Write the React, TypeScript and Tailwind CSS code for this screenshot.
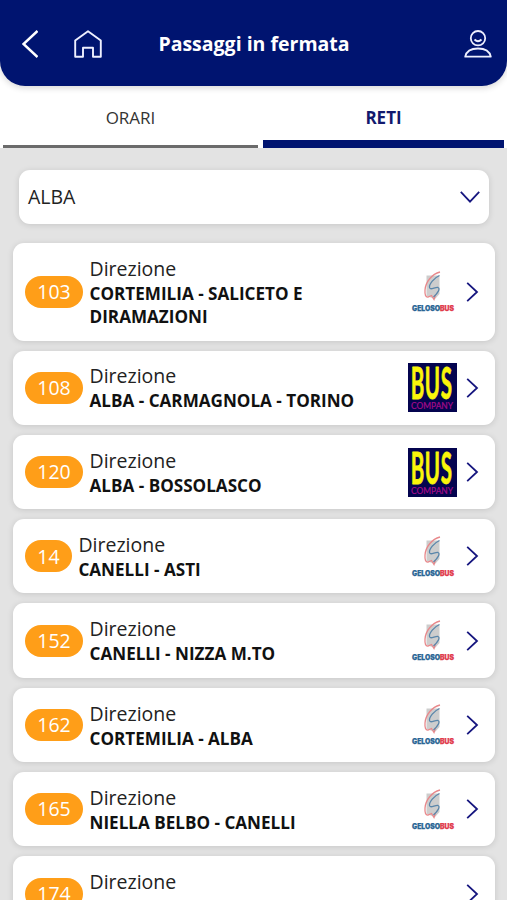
type Operator = "geloso" | "buscompany" | null;

interface Line {
  code: string;
  name: string[];
  operator: Operator;
}

const lines: Line[] = [
  { code: "103", name: ["CORTEMILIA - SALICETO E", "DIRAMAZIONI"], operator: "geloso" },
  { code: "108", name: ["ALBA - CARMAGNOLA - TORINO"], operator: "buscompany" },
  { code: "120", name: ["ALBA - BOSSOLASCO"], operator: "buscompany" },
  { code: "14", name: ["CANELLI - ASTI"], operator: "geloso" },
  { code: "152", name: ["CANELLI - NIZZA M.TO"], operator: "geloso" },
  { code: "162", name: ["CORTEMILIA - ALBA"], operator: "geloso" },
  { code: "165", name: ["NIELLA BELBO - CANELLI"], operator: "geloso" },
  { code: "174", name: [], operator: null },
];

function GelosoLogo() {
  return (
    <svg className="h-[49px] w-[49px] overflow-visible" viewBox="0 0 49 49">
      <path d="M18.500 8.500H31.500V27L27 32L18.500 29Z" fill="#cdcdcd" />
      <path
        d="M32 5C24 7 17.500 15 17 23Q16.500 30.500 20 30L23.500 28.500L26 32.500L27.500 28"
        fill="none"
        stroke="#e8888b"
        strokeWidth="1.300"
      />
      <path
        d="M31.500 8.500C26 11 21 17 21.500 20.500C22 23.500 27 20 30 20.500C32.500 21.500 30 26 25.500 30"
        fill="none"
        stroke="#5a86aa"
        strokeWidth="1.300"
      />
      <text
        x="4"
        y="43.500"
        fontFamily="Inter, 'Liberation Sans', sans-serif"
        fontSize="6.900"
        fontWeight="900"
        strokeWidth="0.250"
        textLength="42"
        lengthAdjust="spacingAndGlyphs"
      >
        <tspan fill="#2b6595" stroke="#2b6595">GELOSO</tspan>
        <tspan fill="#e13a4c" stroke="#e13a4c">BUS</tspan>
      </text>
    </svg>
  );
}

function BusCompanyLogo() {
  return (
    <svg className="h-[49px] w-[49px] overflow-visible" viewBox="0 0 49 49">
      <rect width="49" height="49" fill="#04044f" />
      <text
        transform="translate(0 35.500) scale(1 2.100)"
        x="2.800 16.800 32.800"
        fontFamily="Lato, 'Liberation Sans', sans-serif"
        fontSize="20.500"
        fontWeight="700"
        fill="#faf50a"
        stroke="#faf50a"
        strokeWidth="0.400"
        strokeLinejoin="round"
      >
        BUS
      </text>
      <text
        x="3"
        y="45.800"
        fontFamily="Lato, 'Liberation Sans', sans-serif"
        fontSize="8.500"
        fill="#a60b8b"
        stroke="#a60b8b"
        strokeWidth="0.2"
        textLength="42"
        lengthAdjust="spacingAndGlyphs"
      >
        COMPANY
      </text>
    </svg>
  );
}

function LineCard({ line }: { line: Line }) {
  return (
    <div
      className={`flex shrink-0 items-center rounded-[11px] bg-white pl-[12px] pr-[15px] shadow-[0_1px_6px_rgba(0,0,0,0.13)] ${
        line.name.length > 1 ? "h-[97.5px]" : "h-[74.3px]"
      }`}
    >
      <span className="flex h-8 items-center rounded-full bg-[#ff9e18] px-[12.300px] text-[19.500px] leading-none text-white">
        {line.code}
      </span>
      <div className="ml-[6.500px] flex-1 whitespace-nowrap pt-[0.500px] text-[#111]">
        <p className="h-[26px] text-[19.500px] leading-[25px] text-[#222]">Direzione</p>
        <div className="min-h-[23.200px] text-[17.100px] font-bold leading-[23.200px]">
          {line.name.map((part) => (
            <p key={part}>{part}</p>
          ))}
        </div>
      </div>
      {line.operator === "geloso" && <GelosoLogo />}
      {line.operator === "buscompany" && <BusCompanyLogo />}
      <svg className="ml-[9px] mr-px h-5 w-[13px]" viewBox="0 0 13 20" fill="none" stroke="#16167f" strokeWidth="1.800">
        <path d="M1.200 0.800L11 10L1.200 19.200" />
      </svg>
    </div>
  );
}

export default function App() {
  return (
    <div className="flex h-[900px] w-[507px] flex-col overflow-hidden bg-[#e3e3e3] font-['Open_Sans','Noto_Sans',sans-serif]">
      <div className="shrink-0 bg-white">
        <header className="flex h-[86px] items-center rounded-b-[25px] bg-[#001470] pl-[22px] pr-[15px] pt-[2px] text-white shadow-[0_2px_6px_rgba(0,0,0,0.16)]">
          <svg className="h-7 w-4" viewBox="0 0 16 28" fill="none" stroke="white" strokeWidth="2.500">
            <path d="M15.500 1L1.500 14L15.500 27" />
          </svg>
          <svg className="ml-9 h-7 w-7" viewBox="0 0 28 28" fill="none" stroke="#eef0ff" strokeWidth="1.900">
            <path d="M1.200 26.800V10.500L14 1.200L26.800 10.500V26.800H19V17.800H9V26.800Z" strokeLinejoin="round" />
          </svg>
          <h1 className="flex-1 pr-[48px] text-center text-[19.500px] font-bold">Passaggi in fermata</h1>
          <svg className="ml-[10px] h-7 w-7" viewBox="0 0 28 28" fill="none" stroke="#eef0ff" strokeWidth="1.800">
            <circle cx="14" cy="8.200" r="7.200" />
            <path d="M10.500 9.500Q14 13 17.500 9.500" />
            <path d="M1.200 26.700Q3 18.500 14 18.500T26.800 26.700Z" strokeLinejoin="round" />
          </svg>
        </header>
        <nav className="flex h-[61.500px] gap-[5px] px-[3px] text-[17px]">
          <div className="flex flex-1 items-center justify-center border-b-[3px] border-[#6b6b6b] pt-[5px] text-[#333]">
            ORARI
          </div>
          <div className="flex w-[241px] items-center justify-center border-b-[8px] border-[#001470] pt-[10px] font-bold text-[#12196e]">
            RETI
          </div>
        </nav>
      </div>
      <div className="ml-[19px] mr-[18px] mt-[22px] flex h-[54px] shrink-0 items-center justify-between rounded-[11px] bg-white pl-[9px] pr-[9px] shadow-[0_1px_6px_rgba(0,0,0,0.13)]">
        <span className="pt-px text-[19.500px] text-[#222]">ALBA</span>
        <svg className="h-3 w-5" viewBox="0 0 20 12" fill="none" stroke="#16167f" strokeWidth="1.800">
          <path d="M0.800 0.800L10 10.600L19.200 0.800" />
        </svg>
      </div>
      <main className="mt-[19.600px] flex flex-col gap-[10px] pl-[13px] pr-[12px]">
        {lines.map((line) => (
          <LineCard key={line.code} line={line} />
        ))}
      </main>
    </div>
  );
}
